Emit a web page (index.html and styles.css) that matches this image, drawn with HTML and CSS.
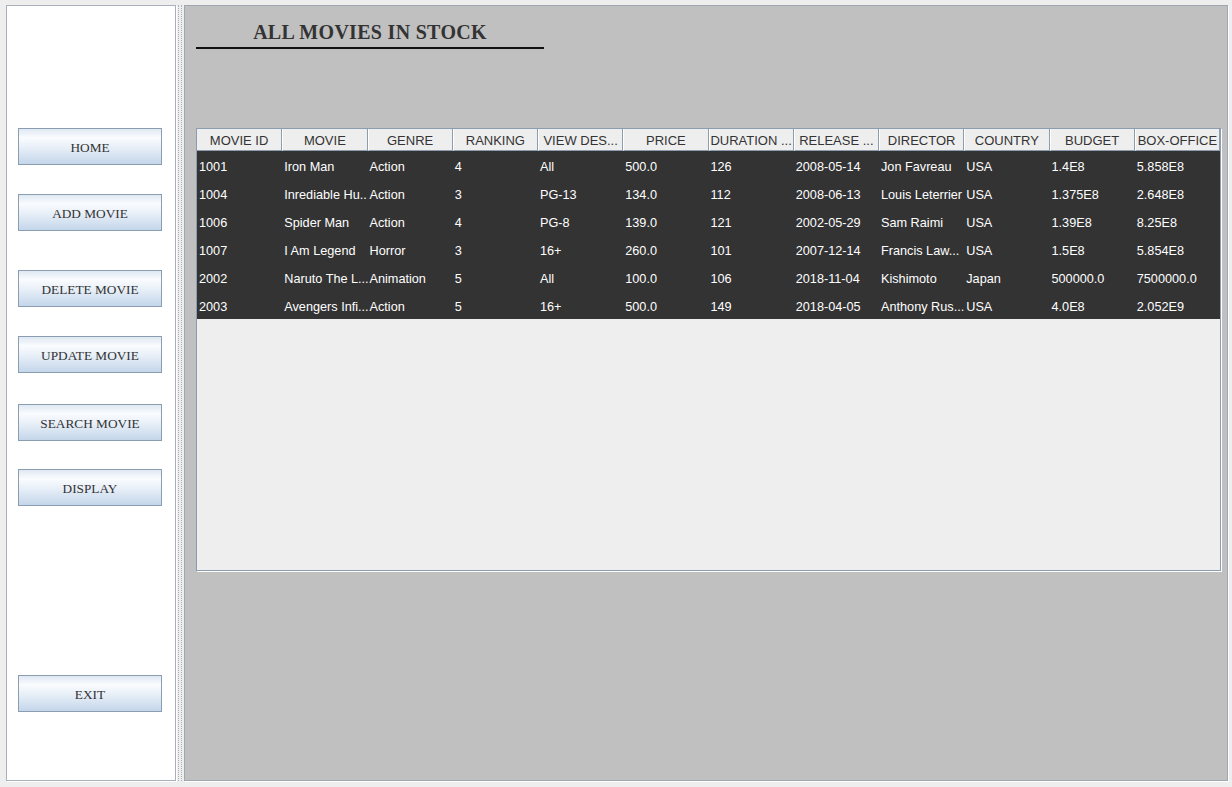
FILE: index.html
```html
<!DOCTYPE html>
<html>
<head>
<meta charset="utf-8">
<link rel="stylesheet" href="styles.css">
</head>
<body>
<div class="app">
  <nav class="sidebar">
    <button class="btn">HOME</button>
    <button class="btn gap-29">ADD MOVIE</button>
    <button class="btn gap-39">DELETE MOVIE</button>
    <button class="btn gap-29">UPDATE MOVIE</button>
    <button class="btn gap-31">SEARCH MOVIE</button>
    <button class="btn gap-28">DISPLAY</button>
    <button class="btn gap-169">EXIT</button>
  </nav>
  <div class="divider"></div>
  <main class="main">
    <h1 class="title">ALL MOVIES IN STOCK</h1>
    <div class="table">
      <div class="thead">
        <div class="th">MOVIE ID</div>
        <div class="th">MOVIE</div>
        <div class="th">GENRE</div>
        <div class="th">RANKING</div>
        <div class="th">VIEW DES...</div>
        <div class="th">PRICE</div>
        <div class="th">DURATION ...</div>
        <div class="th">RELEASE ...</div>
        <div class="th">DIRECTOR</div>
        <div class="th">COUNTRY</div>
        <div class="th">BUDGET</div>
        <div class="th">BOX-OFFICE</div>
      </div>
      <div class="tbody">
        <div class="tr"><span>1001</span><span>Iron Man</span><span>Action</span><span>4</span><span>All</span><span>500.0</span><span>126</span><span>2008-05-14</span><span>Jon Favreau</span><span>USA</span><span>1.4E8</span><span>5.858E8</span></div>
        <div class="tr"><span>1004</span><span>Inrediable Hu..</span><span>Action</span><span>3</span><span>PG-13</span><span>134.0</span><span>112</span><span>2008-06-13</span><span>Louis Leterrier</span><span>USA</span><span>1.375E8</span><span>2.648E8</span></div>
        <div class="tr"><span>1006</span><span>Spider Man</span><span>Action</span><span>4</span><span>PG-8</span><span>139.0</span><span>121</span><span>2002-05-29</span><span>Sam Raimi</span><span>USA</span><span>1.39E8</span><span>8.25E8</span></div>
        <div class="tr"><span>1007</span><span>I Am Legend</span><span>Horror</span><span>3</span><span>16+</span><span>260.0</span><span>101</span><span>2007-12-14</span><span>Francis Law...</span><span>USA</span><span>1.5E8</span><span>5.854E8</span></div>
        <div class="tr"><span>2002</span><span>Naruto The L...</span><span>Animation</span><span>5</span><span>All</span><span>100.0</span><span>106</span><span>2018-11-04</span><span>Kishimoto</span><span>Japan</span><span>500000.0</span><span>7500000.0</span></div>
        <div class="tr"><span>2003</span><span>Avengers Infi...</span><span>Action</span><span>5</span><span>16+</span><span>500.0</span><span>149</span><span>2018-04-05</span><span>Anthony Rus...</span><span>USA</span><span>4.0E8</span><span>2.052E9</span></div>
      </div>
    </div>
  </main>
</div>
</body>
</html>
```

FILE: styles.css
```css
html, body {
  margin: 0;
  padding: 0;
  background: #eeeeee;
}

.app {
  display: flex;
  height: 787px;
  box-sizing: border-box;
  padding: 5px 4px 6px 6px;
}

.sidebar {
  width: 170px;
  box-sizing: border-box;
  background: #ffffff;
  border: 1px solid #a7b0bb;
  box-shadow: 1px 1px 0 #ffffff;
  display: flex;
  flex-direction: column;
  padding-top: 122px;
  padding-left: 11px;
}

.btn {
  width: 144px;
  height: 37px;
  box-sizing: border-box;
  border: 1px solid #8b9db1;
  background: linear-gradient(to bottom, #dfe8f2 0%, #fafcfe 25%, #e6eef7 55%, #c4d6ea 100%);
  font-family: "Liberation Serif", "Times New Roman", serif;
  font-size: 13.3px;
  color: #333333;
  padding: 2px 0 0 0;
  margin: 0;
  text-align: center;
}

.gap-28 { margin-top: 28px; }
.gap-29 { margin-top: 29px; }
.gap-31 { margin-top: 31px; }
.gap-39 { margin-top: 39px; }
.gap-169 { margin-top: 169px; }

.divider {
  width: 2px;
  margin: 0 2px;
  border-left: 1px dotted #a9b0b8;
  border-right: 1px dotted #a9b0b8;
}

.main {
  flex: 1;
  box-sizing: border-box;
  background: #c0c0c0;
  border: 1px solid #9ea7b2;
  box-shadow: 1px 1px 0 #ffffff;
  padding-left: 11px;
  display: flex;
  flex-direction: column;
  align-items: flex-start;
}

.title {
  width: 348px;
  margin: 14px 0 0 0;
  padding-bottom: 3px;
  border-bottom: 2px solid #111111;
  font-family: "Liberation Serif", "Times New Roman", serif;
  font-weight: bold;
  font-size: 20px;
  line-height: 24px;
  letter-spacing: 0.3px;
  color: #333333;
  text-align: center;
}

.table {
  margin-top: 79px;
  width: 1025px;
  height: 443px;
  box-sizing: border-box;
  border: 1px solid #8c9db0;
  box-shadow: 1px 1px 0 #ffffff;
  background: #eeeeee;
  font-family: "Liberation Sans", Arial, sans-serif;
  font-size: 12.7px;
}

.thead {
  display: grid;
  grid-template-columns: repeat(12, 85.25px);
  height: 22px;
  background: #eeeeee;
}

.th {
  box-sizing: border-box;
  height: 22px;
  padding-top: 3px;
  border-right: 1px solid #8c9db0;
  border-left: 1px solid #ffffff;
  border-bottom: 1px solid #8c9db0;
  font-size: 13px;
  line-height: 18px;
  text-align: center;
  color: #333333;
  white-space: nowrap;
  overflow: hidden;
}

.th:first-child {
  border-left: none;
}

.tbody {
  background: #333333;
}

.tr {
  display: grid;
  grid-template-columns: repeat(12, 85.25px);
  height: 28px;
  box-sizing: border-box;
  padding-top: 4px;
  line-height: 24px;
  color: #ffffff;
}

.tr span {
  padding-left: 2px;
  white-space: nowrap;
}
```
